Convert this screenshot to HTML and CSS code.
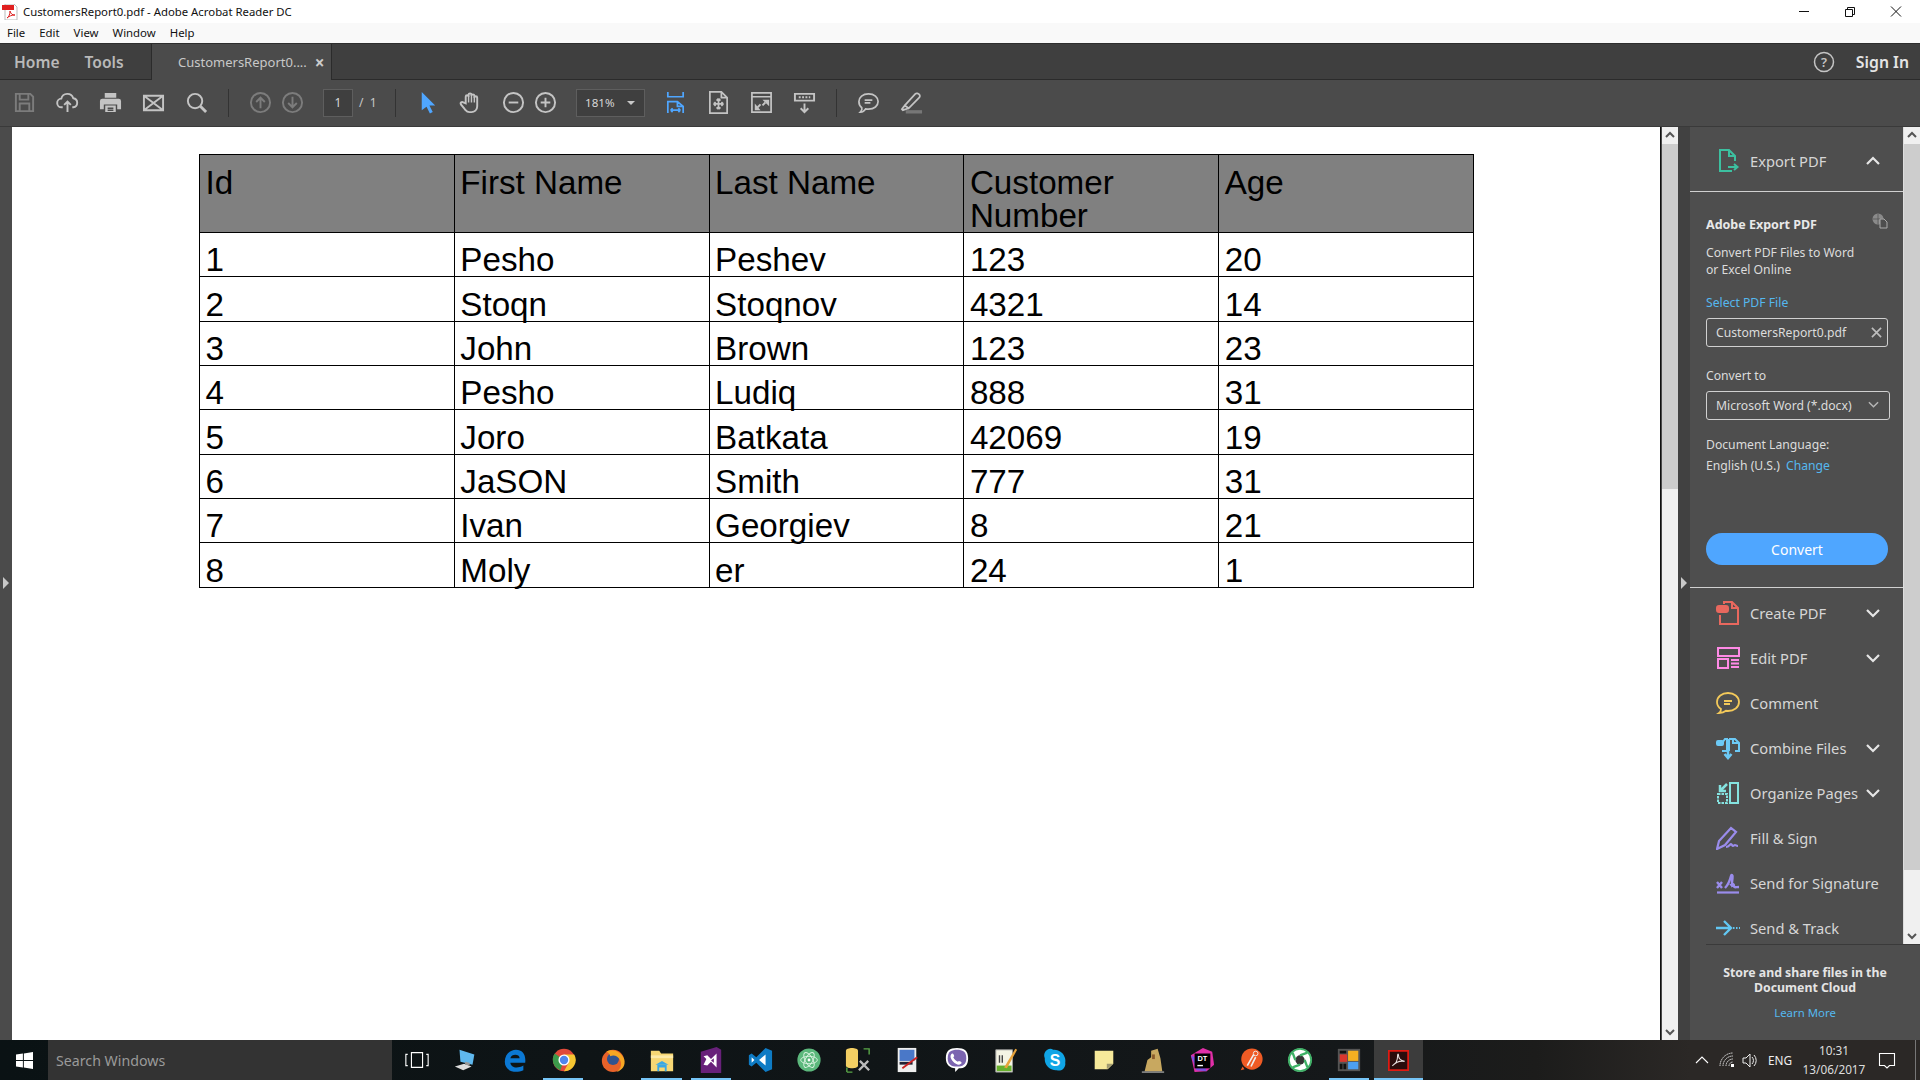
FILE: index.html
```html
<!DOCTYPE html>
<html lang="en">
<head>
<meta charset="utf-8">
<title>CustomersReport0.pdf - Adobe Acrobat Reader DC</title>
<link rel="stylesheet" href="styles.css">
</head>
<body>
<div class="titlebar">
  <svg class="title-icon" viewBox="0 0 16 16"><path d="M3 0h9l3 3v13H3z" fill="#fff" stroke="#bbb"/><rect x="0" y="1" width="12" height="5" fill="#e02020"/><path d="M5 14c2-1 3-4 3-7 1 3 2 4 5 4-3 0-6 1-8 3z" fill="none" stroke="#d22" stroke-width="1"/></svg>
  <span class="title-text">CustomersReport0.pdf - Adobe Acrobat Reader DC</span>
  <div class="winbtns">
    <svg class="winbtn" viewBox="0 0 46 22"><path d="M18 10.500h10" stroke="#111" fill="none"/></svg>
    <svg class="winbtn" viewBox="0 0 46 22"><path d="M18.500 8.500h7v7h-7zM20.500 8.500v-2h7v7h-2" stroke="#111" fill="none"/></svg>
    <svg class="winbtn" viewBox="0 0 46 22"><path d="M18 5.500l10 10M28 5.500l-10 10" stroke="#111" fill="none"/></svg>
  </div>
</div>
<div class="menubar"><span>File</span><span>Edit</span><span>View</span><span>Window</span><span>Help</span></div>
<div class="tabbar">
  <div class="navs"><span class="nav">Home</span><span class="nav">Tools</span></div>
  <div class="tab"><span>CustomersReport0....</span><span class="tab-x">×</span></div>
  <div class="signin">
    <svg class="help" viewBox="0 0 22 22"><circle cx="11" cy="11" r="9.500" fill="none" stroke="#c4c4c4" stroke-width="1.500"/><text x="11" y="15.500" text-anchor="middle" class="help-q">?</text></svg>
    <span>Sign In</span>
  </div>
</div>
<div class="toolbar">
  <div class="tg g1">
    <span class="t"><svg class="ic dim" viewBox="0 0 24 24"><path d="M3 3h15l3 3v15H3zM7 3v6h9V3M7 21v-8h10v8"/></svg></span>
    <span class="t"><svg class="ic" viewBox="0 0 24 24"><path d="M7 17H6a4.500 4.500 0 0 1-.5-9A6.500 6.500 0 0 1 18 7.500a4.800 4.800 0 0 1 0 9.500h-1M12 22V11M8.500 14.500L12 11l3.500 3.500"/></svg></span>
    <span class="t"><svg class="ic solid" viewBox="0 0 24 24"><path d="M6 2h12v5H6zM3.500 8h17A2.500 2.500 0 0 1 23 10.500V19h-4v-5H5v5H1v-8.500A2.500 2.500 0 0 1 3.500 8zM6.500 15h11v7h-11z"/><path class="cut" d="M9 18h6M9 20h6"/></svg></span>
    <span class="t"><svg class="ic" viewBox="0 0 24 24"><path d="M2 5h20v15H2zM2 5l20 15M22 5L2 20"/></svg></span>
    <span class="t"><svg class="ic" viewBox="0 0 24 24"><circle cx="10.500" cy="10.500" r="7.500"/><path d="M16 16l6 6" stroke-width="3"/></svg></span>
  </div>
  <i class="sep sep1"></i>
  <div class="tg g2">
    <span class="t t32"><svg class="ic dim" viewBox="0 0 24 24"><circle cx="12" cy="12" r="10"/><path d="M12 18V7M7.500 11.500L12 7l4.500 4.500"/></svg></span>
    <span class="t t32"><svg class="ic dim" viewBox="0 0 24 24"><circle cx="12" cy="12" r="10"/><path d="M12 6v11M7.500 12.500L12 17l4.500-4.500"/></svg></span>
  </div>
  <span class="pagebox">1</span>
  <span class="pagecount">/&nbsp; 1</span>
  <i class="sep"></i>
  <div class="tg g3">
    <span class="t"><svg class="ic cursor" viewBox="0 0 24 24"><path d="M6 1l14 14h-6l3.500 7-3 1.500-3.500-7L6 20z"/></svg></span>
    <span class="t"><svg class="ic" viewBox="0 0 24 24"><path d="M7 13V6a1.500 1.500 0 0 1 3 0V4a1.500 1.500 0 0 1 3 0v1a1.500 1.500 0 0 1 3 0v2a1.500 1.500 0 0 1 3 0v9c0 4-3 6-6 6h-2c-3 0-4-2-5-3l-4-5c-1-2 1-3 2.500-2z"/><path d="M10 5v7M13 4v8M16 6v6" stroke-width="1.500"/></svg></span>
  </div>
  <div class="tg g4">
    <span class="t t32"><svg class="ic" viewBox="0 0 24 24"><circle cx="12" cy="12" r="10"/><path d="M7 12h10"/></svg></span>
    <span class="t t32"><svg class="ic" viewBox="0 0 24 24"><circle cx="12" cy="12" r="10"/><path d="M7 12h10M12 7v10"/></svg></span>
  </div>
  <div class="zoombox"><span>181%</span><i class="caret"></i></div>
  <div class="tg g5">
    <span class="t"><svg class="ic blue" viewBox="0 0 24 24"><path d="M4 1v5h16V1M4 23V11h10l6 5v7M14 11v5h6M7 20h10M7 20l2-2M7 20l2 2M17 20l-2-2M17 20l-2 2" stroke-width="1.800"/></svg></span>
    <span class="t"><svg class="ic" viewBox="0 0 24 24"><path d="M3 1h12l6 6v16H3zM15 1v6h6M12 8v11M7 13.500h10M12 8l-2 2M12 8l2 2M12 19l-2-2M12 19l2-2M7 13.500l2-2M7 13.500l2 2M17 13.500l-2-2M17 13.500l-2 2" stroke-width="1.800"/></svg></span>
    <span class="t"><svg class="ic" viewBox="0 0 24 24"><path d="M2 2h20v20H2zM2 6h20" stroke-width="1.800"/><path d="M13 9h7v7zM11 20H5v-7z" class="fillcur"/><path d="M16 12l-3 3M8 17l3-3"/></svg></span>
    <span class="t"><svg class="ic" viewBox="0 0 24 24"><path d="M2 3h20v7H2zM12 13v9M8 18l4 4 4-4"/><path d="M6 6.500h12" stroke-dasharray="2 1.500"/></svg></span>
  </div>
  <i class="sep sep2"></i>
  <div class="tg g6">
    <span class="t"><svg class="ic" viewBox="0 0 24 24"><path d="M12 3c6 0 10 3.500 10 8s-4 8-10 8c-1 0-2 0-3-.3C8 20.500 6 22 3.500 22c1.500-1.500 2-3 1.500-4.500C3 16 2 14 2 11c0-4.500 4-8 10-8zM8 9.500h8M8 12.500h6" stroke-width="1.800"/></svg></span>
    <span class="t"><svg class="ic" viewBox="0 0 24 24"><path d="M5 15L16 3c1-1 3-.5 4 .5s1 2.500 0 3.500L9 18zM5 15l-3 4 1 1 6-2" stroke-width="1.800"/><path class="band" d="M6 20h17v3.500H6z"/></svg></span>
  </div>
</div>

<div class="work">
  <div class="leftstrip"><i class="tri"></i></div>
  <main class="page">
    <table class="report">
      <thead>
        <tr><th>Id</th><th>First Name</th><th>Last Name</th><th>Customer Number</th><th>Age</th></tr>
      </thead>
      <tbody>
        <tr><td>1</td><td>Pesho</td><td>Peshev</td><td>123</td><td>20</td></tr>
        <tr><td>2</td><td>Stoqn</td><td>Stoqnov</td><td>4321</td><td>14</td></tr>
        <tr><td>3</td><td>John</td><td>Brown</td><td>123</td><td>23</td></tr>
        <tr><td>4</td><td>Pesho</td><td>Ludiq</td><td>888</td><td>31</td></tr>
        <tr><td>5</td><td>Joro</td><td>Batkata</td><td>42069</td><td>19</td></tr>
        <tr><td>6</td><td>JaSON</td><td>Smith</td><td>777</td><td>31</td></tr>
        <tr><td>7</td><td>Ivan</td><td>Georgiev</td><td>8</td><td>21</td></tr>
        <tr><td>8</td><td>Moly</td><td>er</td><td>24</td><td>1</td></tr>
      </tbody>
    </table>
  </main>
  <div class="vscroll vscroll-main">
    <svg class="arrow" viewBox="0 0 16 17"><path d="M4 10l4-4 4 4"/></svg>
    <div class="thumb thumb-main"></div>
    <div class="track"></div>
    <svg class="arrow" viewBox="0 0 16 17"><path d="M4 7l4 4 4-4"/></svg>
  </div>
  <div class="midstrip"><i class="tri"></i></div>
  <aside class="panel">
    <div class="panel-scrollarea">
      <div class="panel-content">
        <div class="export-head">
          <svg class="pi" viewBox="0 0 24 24" stroke="#3cc0a0"><path d="M19 12V7l-6-6H4v21h12M13 1v6h6M12 18h9M18 15l3.500 3-3.500 3" /></svg>
          <span class="pi-label">Export PDF</span>
          <svg class="chev" viewBox="0 0 16 16"><path d="M2 11l6-6 6 6"/></svg>
        </div>
        <div class="export-body">
          <div class="eb-title"><b>Adobe Export PDF</b>
            <svg class="cloud-doc" viewBox="0 0 16 16"><circle cx="6" cy="6" r="5.500" fill="#8a8a8a"/><path d="M1 6h10M6 1v10" stroke="#4e4e4e" stroke-width=".7"/><path d="M8 6h4l3 3v6H8z" fill="#4e4e4e" stroke="#aaa"/></svg>
          </div>
          <p class="eb-desc">Convert PDF Files to Word<br>or Excel Online</p>
          <div class="eb-link">Select PDF File</div>
          <div class="field"><span>CustomersReport0.pdf</span><svg class="field-x" viewBox="0 0 12 12"><path d="M1 1l10 10M11 1L1 11"/></svg></div>
          <div class="eb-label">Convert to</div>
          <div class="field field-select"><span>Microsoft Word (*.docx)</span><svg class="field-chev" viewBox="0 0 12 12"><path d="M1 3.500l5 5 5-5"/></svg></div>
          <div class="eb-lang">Document Language:</div>
          <div class="eb-lang2">English (U.S.) <a>Change</a></div>
          <button class="convert">Convert</button>
        </div>
        <div class="tools">
          <div class="item"><svg class="pi" viewBox="0 0 24 24" stroke="#e8685e"><path d="M8 3V1h8l6 6v16H4v-9M16 1v6h6"/><rect x="1" y="5" width="11" height="6" rx="2" fill="#e8685e"/></svg><span class="pi-label">Create PDF</span><svg class="chev" viewBox="0 0 16 16"><path d="M2 5l6 6 6-6"/></svg></div>
          <div class="item"><svg class="pi" viewBox="0 0 24 24" stroke="#ff8ae6"><path d="M2 2h21v8H2zM2 13h10v9H2zM15 14h8M15 17.500h8M15 21h8"/></svg><span class="pi-label">Edit PDF</span><svg class="chev" viewBox="0 0 16 16"><path d="M2 5l6 6 6-6"/></svg></div>
          <div class="item"><svg class="pi" viewBox="0 0 24 24" stroke="#f3c95a"><path d="M12 2c6 0 11 3.500 11 9s-5 9-11 9l-2-.2C8 21.500 6 22 3 22c1.500-1 2-2.500 2-4-2.500-1.500-4-4-4-7 0-5.500 5-9 11-9zM8 10h8M8 13h6" stroke-width="1.800"/></svg><span class="pi-label">Comment</span></div>
          <div class="item"><svg class="pi" viewBox="0 0 24 24" stroke="#6cc9f5"><path d="M1 7h5l3-4h2v12H6M13 3h6l4 4v8h-4M13 3v12M17 3v4h6"/><rect x="1" y="5" width="6" height="4" rx="1" fill="#6cc9f5"/><path d="M12 15v7M8.500 18l3.500 4 3.500-4" stroke-width="2.500"/></svg><span class="pi-label">Combine Files</span><svg class="chev" viewBox="0 0 16 16"><path d="M2 5l6 6 6-6"/></svg></div>
          <div class="item"><svg class="pi" viewBox="0 0 24 24" stroke="#85e3e0"><path d="M2 13h9v9H2z" stroke-dasharray="2.500 1"/><path d="M14 2h8v20h-8z"/><path d="M11 3L4 10M4 4v6h6" stroke-width="2.500"/></svg><span class="pi-label">Organize Pages</span><svg class="chev" viewBox="0 0 16 16"><path d="M2 5l6 6 6-6"/></svg></div>
          <div class="item"><svg class="pi" viewBox="0 0 24 24" stroke="#9a8ceb"><path d="M1 23l2-8L15 2l5 4-11 13-8 4zM10 21c3 0 4-3 5-3s1 2 2 2 1-1 2-1 1 1 3 1" stroke-width="2.200"/></svg><span class="pi-label">Fill &amp; Sign</span></div>
          <div class="item"><svg class="pi" viewBox="0 0 24 24" stroke="#9a8ceb"><path d="M1 11l5 6M6 11l-5 6M9 17c3-3 5-8 6-12 .5-2 2-1 1.500 2-.5 4-1 7 0 9M14 14c3-2 4-1 4 1s2 1 5 1" stroke-width="2.400"/><path d="M1 21.500h22" stroke-width="2.200"/></svg><span class="pi-label">Send for Signature</span></div>
          <div class="item"><svg class="pi" viewBox="0 0 24 24" stroke="#62c7f3"><path d="M0 12h14M8 5l7 7-7 7" stroke-width="2.400"/><path d="M17 12h7" stroke-dasharray="1.500 1.500" stroke-width="2"/></svg><span class="pi-label">Send &amp; Track</span></div>
        </div>
      </div>
      <div class="vscroll vscroll-panel">
        <svg class="arrow" viewBox="0 0 16 17"><path d="M4 10l4-4 4 4"/></svg>
        <div class="thumb thumb-panel"></div>
        <div class="track"></div>
        <svg class="arrow" viewBox="0 0 16 17"><path d="M4 7l4 4 4-4"/></svg>
      </div>
    </div>
    <div class="panel-foot">
      <b>Store and share files in the<br>Document Cloud</b>
      <a>Learn More</a>
    </div>
  </aside>
</div>

<footer class="taskbar">
  <div class="start"><svg viewBox="0 0 18 18"><path d="M0 2.600L7.300 1.600V8.500H0zM8.300 1.500L18 0V8.500H8.300zM0 9.500H7.300V16.400L0 15.400zM8.300 9.500H18V18L8.300 16.500z" fill="#fff"/></svg></div>
  <div class="search">Search Windows</div>
  <div class="apps">
    <span class="app"><svg viewBox="0 0 28 28"><path d="M8 6h12v16H8zM4 8H2v12h2M24 8h2v12h-2" fill="none" stroke="#fff" stroke-width="1.200"/></svg></span>
    <span class="app"><svg viewBox="0 0 28 28"><path d="M7 3l16 5-2 11L8 16z" fill="#5fb8ee"/><path d="M2 21l10-3 8 3-9 4z" fill="#ddd"/><path d="M13 16l5 1v3l-5-1z" fill="#999"/></svg></span>
    <span class="app"><svg viewBox="0 0 28 28"><path d="M25 17H9c.5 5 7 7 14 3v5c-9 4-20 1-20-9C3 8 9 3 15 3c7 0 11 5 10 14zM9 12h10c0-5-9-5-10 0z" fill="#0b78d4"/></svg></span>
    <span class="app"><svg viewBox="0 0 28 28"><circle cx="14" cy="14" r="12" fill="#e04a3a"/><path d="M14 14L4 7a12 12 0 0 0 6 18z" fill="#3c9a4a"/><path d="M14 8h11a12 12 0 0 1-11 18l5-9z" fill="#f6c632"/><circle cx="14" cy="14" r="6" fill="#fff"/><circle cx="14" cy="14" r="4.500" fill="#4f86ec"/></svg></span>
    <span class="app"><svg viewBox="0 0 28 28"><circle cx="14" cy="15" r="12" fill="#e8622a"/><circle cx="14" cy="13" r="6.500" fill="#32538f"/><path d="M7 5c7-4 16 0 19 8 2 7-2 12-8 14 5-4 6-9 3-14-2-3-6-5-10-3 0-2-2-4-4-5z" fill="#f6a623"/></svg></span>
    <span class="app"><svg viewBox="0 0 28 28"><path d="M2 4h9l2 3h13v19H2z" fill="#f7d774"/><path d="M2 9h24v3H2z" fill="#fdeaa8"/><path d="M9 19h10v7h-2v-4h-6v4H9z" fill="#39a8e6"/><path d="M7 19l7-4 7 4z" fill="#39a8e6"/></svg></span>
    <span class="app"><svg viewBox="0 0 28 28"><path d="M3 5l17-5 5 3v25H3z" fill="#68217a"/><path d="M6 10l4-1 4 4 6-6v15l-6-6-4 4-4-1 3-6z" fill="#fff"/><path d="M17 12v5l-3-2.500z" fill="#68217a"/></svg></span>
    <span class="app"><svg viewBox="0 0 28 28"><path d="M20 1l7 3v20l-7 3-10-10-5 4-3-2V9l3-2 5 4z" fill="#0e7bc4"/><path d="M20 8v12l-7-6zM5 11l3 3-3 3z" fill="#fff"/></svg></span>
    <span class="app"><svg viewBox="0 0 28 28"><circle cx="14" cy="14" r="12.500" fill="#5cb87c"/><g fill="none" stroke="#d9f2e0" stroke-width="1"><ellipse cx="14" cy="14" rx="9" ry="4"/><ellipse cx="14" cy="14" rx="9" ry="4" transform="rotate(60 14 14)"/><ellipse cx="14" cy="14" rx="9" ry="4" transform="rotate(120 14 14)"/></g><circle cx="14" cy="14" r="1.500" fill="#fff"/></svg></span>
    <span class="app"><svg viewBox="0 0 28 28"><path d="M1 4c0-4 13-4 13 0v16c0 4-13 4-13 0z" fill="#f3cf63"/><path d="M20 2h6v6M2 27h6" fill="none" stroke="#5aa848" stroke-width="1.500"/><path d="M2 22v5" stroke="#5aa848" stroke-width="1.500"/><path d="M15 25l10-10M16 15l10 10" stroke="#bbb" stroke-width="2.500"/></svg></span>
    <span class="app"><svg viewBox="0 0 28 28"><path d="M4 1h20v26H4z" fill="#eee"/><path d="M6 3h16v12H6z" fill="#4a78c8"/><path d="M6 16h14v3H6z" fill="#223"/><path d="M9 23L25 11" stroke="#c22" stroke-width="2"/></svg></span>
    <span class="app"><svg viewBox="0 0 28 28"><path d="M14 1c8 0 12 3 12 11s-4 11-10 11l-4 4v-4C6 22 2 19 2 12 2 4 6 1 14 1z" fill="#fff"/><path d="M14 3c6 0 10 2 10 9s-4 9-10 9-10-2-10-9 4-9 10-9z" fill="#7b64b0"/><path d="M9 7c1 0 2 2 2 3l-1 1c1 2 3 4 5 5l1-1c1 0 3 1 3 2s-2 2-3 2c-4 0-9-5-9-9 0-1 1-3 2-3z" fill="#fff"/></svg></span>
    <span class="app"><svg viewBox="0 0 28 28"><path d="M3 3h18v24H3z" fill="#f4f4e4" stroke="#999"/><path d="M4 20h16v6H4z" fill="#67b02e"/><path d="M7 9v8M10 9v8" stroke="#444" stroke-width="1.500"/><path d="M12 22L24 2l2 1-11 20z" fill="#e8a33a"/></svg></span>
    <span class="app"><svg viewBox="0 0 28 28"><path d="M9 2a7 7 0 0 0-6 10 12 12 0 0 0 13 13 7 7 0 0 0 9-8A12 12 0 0 0 12 3a7 7 0 0 0-3-1z" fill="#10a5e6"/><text x="14" y="20" class="skype-s" text-anchor="middle">S</text></svg></span>
    <span class="app"><svg viewBox="0 0 28 28"><path d="M4 4h20v14l-6 6H4z" fill="#f6e99a"/><path d="M24 18h-7v6z" fill="#a09a70"/></svg></span>
    <span class="app"><svg viewBox="0 0 28 28"><path d="M5 26l3-12 4-3V4l7-2 3 10 2 14z" fill="#c8a860"/><path d="M13 8h3v5h-3z" fill="#8a5a2a"/><path d="M2 27h24" stroke="#ddd"/></svg></span>
    <span class="app"><svg viewBox="0 0 28 28"><path d="M2 9l13-8 10 4 2 14-8 7-13 1z" fill="#e12fa8"/><path d="M2 9l6 16 11 1-4-10z" fill="#7b52e0"/><path d="M6 7h17v16H6z" fill="#000"/><text x="14.500" y="15" class="dt" text-anchor="middle">DT</text><path d="M9 20h6" stroke="#fff" stroke-width="1.500"/></svg></span>
    <span class="app"><svg viewBox="0 0 28 28"><circle cx="15" cy="13" r="11.500" fill="#ef5b25"/><path d="M3 25l2-4 2 3z" fill="#ef5b25"/><path d="M10 20l7-12M14 21l5-10" stroke="#eee" stroke-width="1.800"/><circle cx="19" cy="7" r="2.500" fill="none" stroke="#eee"/></svg></span>
    <span class="app"><svg viewBox="0 0 28 28"><circle cx="14" cy="14" r="12.500" fill="#fff"/><circle cx="14" cy="14" r="12" fill="none" stroke="#3eb066" stroke-width="2"/><circle cx="14" cy="14" r="5" fill="#333"/><path d="M14 9l8-3M19 14l3 8M14 19l-8 3M9 14L6 6" stroke="#3eb066" stroke-width="2.500"/></svg></span>
    <span class="app"><svg viewBox="0 0 28 28"><path d="M2 2h24v24H2z" fill="#555"/><path d="M13 4h11v11H13z" fill="#f6b021"/><path d="M13 16h11v8H13z" fill="#4d9ff0"/><path d="M4 8h8v8H4z" fill="#d9362e"/><path d="M4 4h7v3H4zM4 18h3v6H4zM8 18h3v6H8z" fill="#111"/></svg></span>
    <span class="app app-active"><svg class="acro" viewBox="0 0 24 24"><path d="M1 1h22v22H1z" fill="#2a0c0c" stroke="#e01a12" stroke-width="2"/><path d="M5 18c4-2 6-7 6-12 0-2 1-2 1 0 0 3 2 6 7 7-5-1-10 1-14 5z" fill="none" stroke="#e8e0e0" stroke-width="1.200"/></svg></span>
  </div>
  <div class="tray">
    <svg class="tray-ic tray-up" viewBox="0 0 16 16"><path d="M2 11l6-6 6 6" fill="none" stroke="#fff" stroke-width="1.100"/></svg>
    <svg class="tray-ic" viewBox="0 0 16 16"><g fill="none" stroke="#ddd"><path d="M1 14A13 13 0 0 1 14 1M4 14A10 10 0 0 1 14 4M7 14a7 7 0 0 1 7-7M10 14a4 4 0 0 1 4-4" stroke-dasharray="1.500 .5"/></g><rect x="12" y="12" width="3" height="3" fill="#fff"/></svg>
    <svg class="tray-ic" viewBox="0 0 16 16"><path d="M1 6h3l4-4v13l-4-4H1zM10 5a5 5 0 0 1 0 7M12 3a8 8 0 0 1 0 11" fill="none" stroke="#eee" stroke-width="1"/></svg>
    <span class="eng">ENG</span>
    <div class="clock"><span>10:31</span><span>13/06/2017</span></div>
    <svg class="notif" viewBox="0 0 18 18"><path d="M1.500 2.500h15v12h-5l-2.500 2.500-2.500-2.500h-5z" fill="none" stroke="#fff" stroke-width="1.100"/></svg>
    <i class="showdesk"></i>
  </div>
</footer>
</body>
</html>
```
FILE: styles.css
```css
* { box-sizing: border-box; }
html, body { margin: 0; padding: 0; }
body { width: 1920px; height: 1080px; overflow: hidden; font-family: "Noto Sans", sans-serif; background: #4b4b4b; display: flex; flex-direction: column; }
svg { display: block; }

.titlebar { height: 23px; background: #fff; display: flex; align-items: center; padding-left: 2px; flex: none; }
.title-icon { width: 16px; height: 16px; }
.title-text { margin-left: 5px; font-size: 11.35px; color: #111; }
.winbtns { margin-left: auto; display: flex; height: 22px; margin-right: 1px; }
.winbtn { width: 46px; height: 22px; }

.menubar { height: 20px; background: #f9f9f9; display: flex; align-items: center; padding: 0 0 2px 7px; gap: 14px; font-size: 11.4px; color: #111; flex: none; }

.tabbar { height: 37px; background: #3f3f3f; border-top: 1px solid #2e2e2e; border-bottom: 1px solid #2b2b2b; display: flex; align-items: center; flex: none; color: #b9b9b9; }
.navs { width: 151px; padding-left: 14px; display: flex; gap: 25px; flex: none; }
.nav { font-size: 15.6px; font-weight: 600; }
.tab { width: 181px; height: 36px; align-self: flex-start; background: #4b4b4b; border-left: 1px solid #2b2b2b; border-right: 1px solid #2b2b2b; display: flex; align-items: center; padding-left: 26px; font-size: 13px; color: #c8c8c8; }
.tab-x { margin-left: 8px; font-size: 17px; font-weight: 700; color: #ccc; }
.signin { margin-left: auto; margin-right: 11px; display: flex; align-items: center; font-size: 15.8px; font-weight: 600; color: #e4e4e4; }
.help { width: 22px; height: 22px; margin-right: 21px; }
.help-q { font-size: 13px; font-weight: 600; fill: #c4c4c4; font-family: "Noto Sans", sans-serif; }

.toolbar { height: 47px; background: #4b4b4b; border-bottom: 1px solid #3a3a3a; padding-bottom: 1px; display: flex; align-items: center; flex: none; }
.tg { display: flex; align-items: center; flex: none; }
.t { width: 43px; height: 30px; display: flex; align-items: center; justify-content: center; flex: none; }
.t32 { width: 32px; }
.g1 { margin-left: 3px; }
.g2 { margin-left: 15px; }
.g3 { margin-left: 10px; }
.g4 { margin-left: 5px; }
.g5 { margin-left: 9px; }
.g6 { margin-left: 10px; }
.sep { width: 1px; height: 28px; background: #333; flex: none; }
.sep1 { margin-left: 10px; }
.sep2 { margin-left: 10px; }
.ic { width: 23px; height: 23px; fill: none; stroke: #c4c4c4; stroke-width: 2; }
.ic.dim { stroke: #7c7c7c; }
.ic.solid { fill: #c4c4c4; stroke: none; }
.ic .cut { stroke: #4b4b4b; stroke-width: 1.500; fill: none; }
.ic.cursor { fill: #4fa6ff; stroke: none; }
.ic.blue { stroke: #4fa6ff; }
.ic .fillcur { fill: #c4c4c4; stroke: none; }
.ic .band { fill: #777; stroke: none; }
.pagebox { margin-left: 15px; width: 30px; height: 28px; background: #3f3f3f; border: 1px solid #5e5e5e; display: flex; align-items: center; justify-content: center; font-size: 12px; color: #d8d8d8; flex: none; }
.pagecount { margin-left: 6px; width: 36px; font-size: 12px; color: #c8c8c8; flex: none; }
.zoombox { margin-left: 15px; width: 69px; height: 28px; background: #3f3f3f; border: 1px solid #5e5e5e; display: flex; align-items: center; padding: 0 8px; font-size: 11.6px; color: #d8d8d8; flex: none; }
.caret { margin-left: auto; margin-right: 1px; width: 0; height: 0; border-left: 4px solid transparent; border-right: 4px solid transparent; border-top: 4px solid #c8c8c8; }

.work { height: 913px; display: flex; flex: none; }
.leftstrip { width: 12px; background: #4b4b4b; display: flex; align-items: center; flex: none; }
.tri { width: 0; height: 0; border-left: 6px solid #c8c8c8; border-top: 6px solid transparent; border-bottom: 6px solid transparent; margin-left: 3px; margin-top: -2px; }
.page { width: 1649px; background: #fff; border-right: 1px solid #111; padding: 27px 0 0 187px; flex: none; }
.report { border-collapse: collapse; table-layout: fixed; width: 1275px; font-family: "Liberation Sans", Arial, sans-serif; font-size: 33.2px; line-height: 33px; color: #000; }
.report th, .report td { border: 1px solid #000; padding: 0 5px 0 5.5px; text-align: left; font-weight: 400; }
.report th { background: #808080; height: 78px; vertical-align: top; padding-top: 11px; }
.report td { height: 44.35px; vertical-align: bottom; padding-bottom: 0; }

.vscroll { width: 16px; background: #f0f0f0; display: flex; flex-direction: column; flex: none; }
.arrow { width: 16px; height: 17px; flex: none; fill: none; stroke: #555; stroke-width: 2; }
.thumb { background: #cdcdcd; flex: none; }
.thumb-main { height: 345px; }
.thumb-panel { height: 726px; }
.track { flex: 1; }
.vscroll-main { margin-left: 1px; }
.midstrip { width: 12px; background: #414141; display: flex; align-items: center; flex: none; }
.midstrip .tri { margin-left: 3px; }

.panel { width: 230px; background: #4e4e4e; display: flex; flex-direction: column; flex: none; color: #dcdcdc; }
.panel-scrollarea { height: 817px; display: flex; flex: none; }
.panel-content { width: 214px; border-right: 1px solid #ddd; flex: none; overflow: hidden; }
.export-head { height: 65px; border-bottom: 1px solid #d0d0d0; display: flex; align-items: center; padding: 3px 22px 0 26px; }
.pi { width: 24px; height: 24px; fill: none; stroke-width: 2; flex: none; }
.pi-label { margin-left: 10px; font-size: 14.7px; color: #d6d6d6; }
.chev { width: 16px; height: 16px; margin-left: auto; fill: none; stroke: #e6e6e6; stroke-width: 2.200; }
.export-body { padding: 24px 0 0 16px; font-size: 12.2px; line-height: 17px; }
.eb-title { width: 182px; display: flex; align-items: center; justify-content: space-between; font-size: 12.5px; color: #e8e8e8; }
.cloud-doc { width: 16px; height: 16px; margin-top: -7px; }
.eb-desc { margin: 11px 0 0; }
.eb-link { margin-top: 16px; color: #55b8ef; }
.field { margin-top: 7px; width: 182px; height: 29px; border: 1px solid #d0d0d0; border-radius: 3px; display: flex; align-items: center; padding: 0 5px 0 9px; justify-content: space-between; }
.field-select { margin-top: 7px; width: 184px; padding-right: 10px; }
.field-x { width: 11px; height: 11px; fill: none; stroke: #bdbdbd; stroke-width: 1.800; }
.field-chev { width: 11px; height: 11px; fill: none; stroke: #b5b5b5; stroke-width: 1.600; margin-top: -3px; }
.eb-label { margin-top: 20px; }
.eb-lang { margin-top: 16px; }
.eb-lang2 { margin-top: 4px; }
.eb-lang2 a { color: #55b8ef; margin-left: 3px; }
.convert { display: block; margin-top: 59px; width: 182px; height: 32px; border: 0; border-radius: 16px; background: #4fa6ff; color: #fff; font-family: inherit; font-size: 14px; padding: 0; }
.tools { margin-top: 22px; border-top: 1px solid #d0d0d0; padding-top: 3px; }
.item { height: 44.9px; display: flex; align-items: center; padding: 0 22px 0 26px; }

.panel-foot { flex: 1; margin-left: 16px; padding: 20px 16px 0 0; border-top: 1px solid #3a3a3a; text-align: center; font-size: 12.3px; line-height: 15px; color: #e4e4e4; display: flex; flex-direction: column; }
.panel-foot a { margin-top: 10px; font-size: 11.4px; color: #55b8ef; }

.taskbar { height: 40px; flex: none; display: flex; background: linear-gradient(90deg, #0a1214 0%, #101517 45%, #15181a 70%, #1c1c1b 80%, #2b2826 88%, #2b2826 100%); color: #eee; }
.start { width: 48px; display: flex; align-items: center; justify-content: center; flex: none; }
.start svg { width: 17px; height: 17px; }
.search { width: 344px; background: #333; display: flex; align-items: center; padding-left: 8px; font-size: 14.2px; color: #9a9a9a; flex: none; }
.apps { display: flex; flex: none; }
.app { position: relative; width: 49.1px; height: 40px; display: flex; align-items: center; justify-content: center; flex: none; }
.app svg { width: 26px; height: 26px; }
.app:nth-child(4)::after, .app:nth-child(6)::after, .app:nth-child(7)::after, .app:nth-child(20)::after { content: ""; position: absolute; left: 4px; right: 5px; bottom: 0; height: 2px; background: #76c5f7; }
.app-active { background: #3c3c3c; }
.app-active::after { content: ""; position: absolute; left: 0; right: 0; bottom: 0; height: 2px; background: #76c5f7; }
.app .acro { width: 21px; height: 21px; }
.skype-s { font: 700 17px "Liberation Sans", sans-serif; fill: #fff; }
.dt { font: 700 8px "Liberation Sans", sans-serif; fill: #fff; }
.tray { margin-left: auto; display: flex; align-items: center; flex: none; }
.tray-ic { width: 16px; height: 16px; margin-right: 7px; }
.tray-up { margin-right: 9px; }
.eng { font-size: 11.8px; margin-left: 3px; color: #eee; }
.clock { margin-left: 10px; width: 64px; display: flex; flex-direction: column; align-items: center; font-size: 11.8px; line-height: 19px; color: #ddd; }
.notif { width: 18px; height: 18px; margin-left: 12px; }
.showdesk { width: 1px; height: 40px; background: #777; margin-left: 19px; margin-right: 4px; }
```
